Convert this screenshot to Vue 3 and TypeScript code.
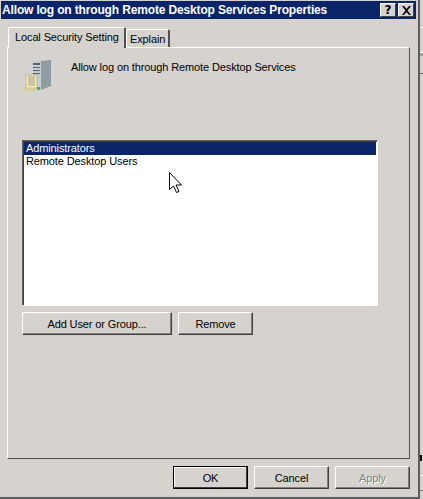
<template>
  <div class="desktop">
    <div class="dialog">
      <div class="titlebar">
        <span class="title">Allow log on through Remote Desktop Services Properties</span>
        <div class="caption-btns">
          <button class="caption-btn">?</button>
          <button class="caption-btn">
            <svg width="9" height="9" viewBox="0 0 9 9">
              <path d="M0 0h2l2.500 3L7 0h2L5.500 4.500 9 9H7L4.500 6 2 9H0l3.500-4.500z" fill="#000" />
            </svg>
          </button>
        </div>
      </div>

      <div class="tabs">
        <div class="tab active">Local Security Setting</div>
        <div class="tab explain">Explain</div>
      </div>

      <div class="panel">
        <div class="policy">
          <svg class="policy-icon" width="30" height="32" viewBox="0 0 30 32">
            <path d="M10 1h9v28h-9z" fill="#c3ccd0" />
            <path d="M19 1l10-1v26l-10 4z" fill="#8f9ca1" />
            <path d="M11 3h7v2h-7zM11 7h7v1h-7zM11 10h7v1h-7zM11 13h7v1h-7z" fill="#56646c" />
            <rect x="15" y="27" width="3" height="3" fill="#3fbf4a" />
            <path d="M4 15h11v13H4z" fill="#f6ecc4" stroke="#a89a68" stroke-width=".6" />
            <path d="M6 17h7M6 19h7M6 21h7M6 23h7M6 25h7" stroke="#a09c80" stroke-width="1" />
            <path d="M0 28h14v3H1z" fill="#dccf9a" />
          </svg>
          <span>Allow log on through Remote Desktop Services</span>
        </div>

        <div class="listbox">
          <div
            v-for="(user, i) in users"
            :key="user"
            class="list-item"
            :class="{ selected: i === 0 }"
          >
            {{ user }}
          </div>
          <svg class="cursor" width="13" height="21" viewBox="0 0 13 21">
            <path d="M.5.500v17l4-3.500 3 6.500 2.500-1-3-6.500h5.500z" fill="#fff" stroke="#000" stroke-width="1" />
          </svg>
        </div>

        <div class="list-actions">
          <button class="btn add">Add User or Group...</button>
          <button class="btn remove">Remove</button>
        </div>
      </div>

      <div class="footer">
        <button class="btn dialog-btn default">OK</button>
        <button class="btn dialog-btn">Cancel</button>
        <button class="btn dialog-btn disabled">Apply</button>
      </div>
    </div>
    <div class="behind"><i class="scrap"></i></div>
  </div>
</template>

<script setup lang="ts">
const users: string[] = ['Administrators', 'Remote Desktop Users']
</script>

<style>
html,
body {
  margin: 0;
  background: #d6d3ce;
}
</style>

<style scoped>
.desktop {
  display: flex;
  width: 423px;
  height: 499px;
  overflow: hidden;
  font-family: "Liberation Sans", Arial, sans-serif;
  font-size: 11px;
  letter-spacing: -0.12px;
  color: #000;
  background: #d6d3ce;
}

.dialog {
  box-sizing: border-box;
  width: 420px;
  height: 499px;
  flex-shrink: 0;
  padding: 1px 0 0 1px;
  background: #d6d3ce;
  border-right: 2px solid #5c5c5c;
  border-bottom: 2px solid #5c5c5c;
}

.titlebar {
  display: flex;
  align-items: center;
  justify-content: space-between;
  width: 415px;
  height: 18px;
  padding: 0 2px 0 1px;
  box-sizing: border-box;
  background: #0a246a;
  color: #fff;
}

.title {
  font-weight: bold;
  font-size: 12px;
  letter-spacing: -0.15px;
  white-space: nowrap;
}

.caption-btns {
  display: flex;
  gap: 2px;
}

.caption-btn {
  display: flex;
  align-items: center;
  justify-content: center;
  width: 16px;
  height: 14px;
  padding: 0;
  border: 1px solid;
  border-color: #fff #404040 #404040 #fff;
  background: #d6d3ce;
  font-family: "DejaVu Sans", sans-serif;
  font-weight: bold;
  font-size: 12px;
  color: #000;
}

.tabs {
  display: flex;
  align-items: flex-end;
  height: 20px;
  margin: 8px 0 0 7px;
}

.tab {
  box-sizing: border-box;
  height: 18px;
  border: 1px solid #fff;
  border-right: 2px solid #505050;
  border-bottom: none;
  border-radius: 2px 2px 0 0;
  white-space: nowrap;
}

.tab.active {
  position: relative;
  z-index: 1;
  width: 118px;
  height: 21px;
  margin-bottom: -1px;
  padding: 3px 0 0 6px;
  background: #d6d3ce;
}

.tab.explain {
  width: 44px;
  padding: 3px 0 0 3px;
}

.panel {
  box-sizing: border-box;
  width: 403px;
  height: 412px;
  margin-left: 6px;
  padding: 12px 0 0 14px;
  border: 1px solid;
  border-color: #fff #505050 #505050 #fff;
}

.policy {
  display: flex;
  gap: 19px;
  height: 80px;
}

.policy span {
  margin-top: 1px;
}

.listbox {
  position: relative;
  box-sizing: border-box;
  width: 356px;
  height: 166px;
  padding: 1px;
  background: #fff;
  border: 1px solid;
  border-color: #606060 #fff #fff #606060;
  box-shadow: inset 1px 1px 0 #404040;
}

.list-item {
  height: 13px;
  line-height: 13px;
  padding-left: 2px;
  white-space: nowrap;
}

.list-item.selected {
  background: #0a246a;
  color: #fff;
}

.cursor {
  position: absolute;
  left: 146px;
  top: 31px;
}

.list-actions {
  display: flex;
  gap: 6px;
  margin-top: 6px;
}

.btn {
  box-sizing: border-box;
  height: 23px;
  padding: 0;
  border: 1px solid;
  border-color: #fff #404040 #404040 #fff;
  box-shadow: inset -1px -1px 0 #808080;
  background: #d6d3ce;
  font-family: inherit;
  font-size: inherit;
  letter-spacing: inherit;
  color: #000;
}

.add {
  width: 150px;
}

.remove {
  width: 75px;
}

.footer {
  display: flex;
  gap: 6px;
  margin: 7px 0 0 172px;
}

.dialog-btn {
  width: 75px;
}

.dialog-btn.default {
  border: 1px solid #000;
  box-shadow: inset -1px -1px 0 #404040, inset 1px 1px 0 #fff;
}

.dialog-btn.disabled {
  color: #808080;
  text-shadow: 1px 1px 0 #fff;
}

.behind {
  position: relative;
  flex: 1;
  overflow: hidden;
  background: linear-gradient(
    to bottom,
    #d6d3ce 27px,
    #fff 27px 28px,
    #d6d3ce 28px 52px,
    #fff 52px 53px,
    #a0a0a0 53px 56px,
    #d6d3ce 56px 73px,
    #606060 73px 74px,
    #d6d3ce 74px 475px,
    #fff 475px 476px,
    #d6d3ce 476px 490px,
    #808080 490px 491px,
    #d6d3ce 491px
  );
}

.scrap {
  position: absolute;
  left: 0;
  top: 455px;
  width: 2px;
  height: 6px;
  background: #000;
}
</style>
